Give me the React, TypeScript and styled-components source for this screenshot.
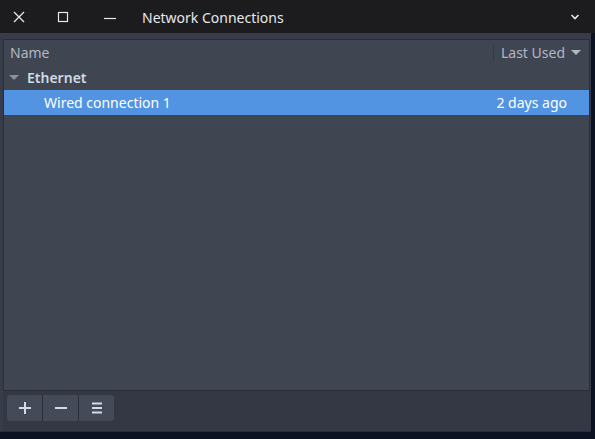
import React from 'react';
import styled, { createGlobalStyle } from 'styled-components';

const Global = createGlobalStyle`
  html, body { margin: 0; padding: 0; background: #0c1222; }
  body { font-family: "Noto Sans", "Open Sans", sans-serif; }
`;

const Desktop = styled.div`
  width: 595px;
  height: 439px;
  background: #0c1222;
  overflow: hidden;
`;

const Window = styled.div`
  display: flex;
  flex-direction: column;
  width: 595px;
  height: 432px;
`;

const TitleBar = styled.div`
  display: flex;
  align-items: center;
  height: 33px;
  background: #1c1c1e;
  color: #e6e8ec;
  font-size: 14px;
  flex-shrink: 0;
`;

const TitleButton = styled.div<{ $w: number }>`
  display: flex;
  align-items: center;
  justify-content: center;
  width: ${p => p.$w}px;
  height: 33px;
`;

const Title = styled.div`
  flex: 1;
  padding: 2px 0 0 10px;
`;

const Body = styled.div`
  flex: 1;
  display: flex;
  flex-direction: column;
  width: 591px;
  background: #383c4a;
  border-bottom: 1px solid #2b2e38;
  padding: 6px 0 0 3px;
  box-sizing: border-box;
`;

const Tree = styled.div`
  display: flex;
  flex-direction: column;
  width: 587px;
  height: 352px;
  background: #404552;
  border: 1px solid #2b2e39;
  box-sizing: border-box;
  font-size: 14px;
`;

const Header = styled.div`
  display: flex;
  align-items: center;
  height: 25px;
  color: #b0b7c2;
`;

const HeaderCell = styled.div<{ $sep?: boolean }>`
  display: flex;
  align-items: center;
  height: 16px;
  padding: 0 6px;
  ${p => (p.$sep ? 'border-left: 1px solid #363a46; padding-left: 7px;' : '')}
`;

const Row = styled.div<{ $sel?: boolean }>`
  display: flex;
  align-items: center;
  height: 25px;
  background: ${p => (p.$sel ? '#5294e2' : 'transparent')};
  color: ${p => (p.$sel ? '#ffffff' : '#d3dae3')};
`;

const Expander = styled.span`
  display: flex;
  margin-left: 5px;
  color: #8a919d;
`;

const Group = styled.span`
  font-weight: 600;
  margin-left: 8px;
`;

const Cell = styled.span<{ $l?: number; $r?: number }>`
  margin-left: ${p => p.$l ?? 0}px;
  margin-right: ${p => p.$r ?? 0}px;
`;

const Spacer = styled.div`
  flex: 1;
`;

const Toolbar = styled.div`
  flex: 1;
  display: flex;
  align-items: flex-start;
  padding: 4px 0 0 4px;
  background: #343845;
`;

const ButtonGroup = styled.div`
  display: flex;
  border-radius: 3px;
  overflow: hidden;
  background: #2b2e39;
  gap: 1px;
`;

const ToolButton = styled.div`
  display: flex;
  align-items: center;
  justify-content: center;
  width: 35px;
  height: 26px;
  background: #444a58;
`;

const Arrow = ({ x = 0 }: { x?: number }) => (
  <svg width="10" height="6" viewBox="0 0 10 6" style={{ marginLeft: x }}>
    <path d="M0 0 L10 0 L5 5 Z" fill="currentColor" />
  </svg>
);

export default function App() {
  return (
    <Desktop>
      <Global />
      <Window>
        <TitleBar>
          <TitleButton $w={38}>
            <svg width="12" height="12" viewBox="0 0 12 12">
              <path d="M1 1 L11 11 M11 1 L1 11" stroke="#e6e8ec" strokeWidth="1.3" />
            </svg>
          </TitleButton>
          <TitleButton $w={50}>
            <svg width="12" height="12" viewBox="0 0 12 12">
              <rect x="1.5" y="1.5" width="9" height="9" fill="none" stroke="#e6e8ec" strokeWidth="1.2" />
            </svg>
          </TitleButton>
          <TitleButton $w={44}>
            <svg width="12" height="12" viewBox="0 0 12 12">
              <path d="M0 7.5 L12 7.5" stroke="#e6e8ec" strokeWidth="1.2" />
            </svg>
          </TitleButton>
          <Title>Network Connections</Title>
          <TitleButton $w={40}>
            <svg width="10" height="6" viewBox="0 0 10 6">
              <path d="M1.5 1 L5 4.5 L8.5 1" stroke="#e6e8ec" strokeWidth="1.6" fill="none" />
            </svg>
          </TitleButton>
        </TitleBar>
        <Body>
          <Tree>
            <Header>
              <HeaderCell>Name</HeaderCell>
              <Spacer />
              <HeaderCell $sep>
                Last Used
                <Arrow x={6} />
              </HeaderCell>
              <Cell $r={2} />
            </Header>
            <Row>
              <Expander>
                <Arrow />
              </Expander>
              <Group>Ethernet</Group>
            </Row>
            <Row $sel>
              <Cell $l={40}>Wired connection 1</Cell>
              <Spacer />
              <Cell $r={22}>2 days ago</Cell>
            </Row>
          </Tree>
          <Toolbar>
            <ButtonGroup>
              <ToolButton>
                <svg width="12" height="12" viewBox="0 0 12 12">
                  <path d="M6 0 L6 12 M0 6 L12 6" stroke="#d3dae3" strokeWidth="2" />
                </svg>
              </ToolButton>
              <ToolButton>
                <svg width="12" height="12" viewBox="0 0 12 12">
                  <path d="M0 6 L12 6" stroke="#d3dae3" strokeWidth="2" />
                </svg>
              </ToolButton>
              <ToolButton>
                <svg width="12" height="12" viewBox="0 0 12 12">
                  <path d="M1 1.5 L11 1.5 M1 6 L11 6 M1 10.5 L11 10.5" stroke="#d3dae3" strokeWidth="2" />
                </svg>
              </ToolButton>
            </ButtonGroup>
          </Toolbar>
        </Body>
      </Window>
    </Desktop>
  );
}
